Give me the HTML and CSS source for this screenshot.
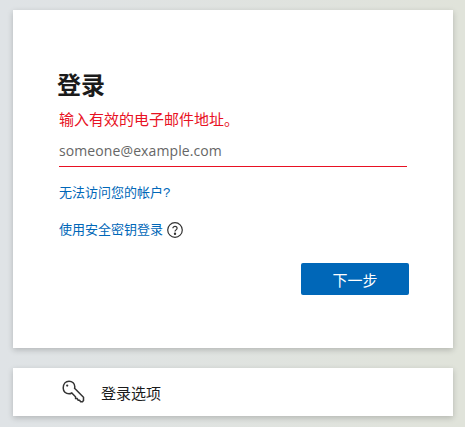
FILE: index.html
```html
<!DOCTYPE html>
<html lang="zh-CN">
<head>
  <meta charset="UTF-8">
  <meta name="viewport" content="width=device-width, initial-scale=1.0">
  <title>登录</title>
  <link rel="stylesheet" href="styles.css">
</head>
<body>
  <div class="card login-card">
    <h1>登录</h1>
    <div class="error">输入有效的电子邮件地址。</div>
    <input class="email" type="text" placeholder="someone@example.com">
    <div class="link-row"><a href="#">无法访问您的帐户?</a></div>
    <div class="link-row key-row">
      <a href="#">使用安全密钥登录</a>
      <svg class="help" width="16" height="16" viewBox="0 0 16 16" fill="none" stroke="#333" stroke-width="1.2">
        <circle cx="8" cy="8" r="7.3"/>
        <path d="M5.900 6.300c0-1.200 1-2 2.100-2s2.100.8 2.100 1.900c0 1.700-2.100 1.700-2.100 3.400"/>
        <circle cx="8" cy="11.800" r=".6" fill="#333"/>
      </svg>
    </div>
    <div class="actions">
      <button type="button">下一步</button>
    </div>
  </div>
  <div class="card options-card">
    <svg class="key" width="24" height="24" viewBox="0 0 24 24" fill="none" stroke="#333" stroke-width="1.5">
      <path d="M8 1.200c3.300 0 5.800 2.500 5.800 5.600 0 .6-.1 1.100-.2 1.500l8.900 8.900v3.300l-1 1.300h-1.800l-1.200-1.600h-1.300l-1.100-1.700h-1.500l-.1-1.700-3.700-3.800c-1 .6-1.800.8-2.800.8-3.200 0-5.800-2.400-5.800-5.700C2.200 3.700 4.800 1.200 8 1.200z"/>
      <circle cx="6.200" cy="5.600" r="1.100" fill="#333" stroke="none"/>
    </svg>
    <span>登录选项</span>
  </div>
</body>
</html>
```

FILE: styles.css
```css
body {
  margin: 0;
  height: 427px;
  overflow: hidden;
  font-family: "Liberation Sans", "Noto Sans CJK SC", sans-serif;
  background: linear-gradient(90deg, #dfe3e6, #e0e3da);
  color: #1b1b1b;
}

.card {
  width: 440px;
  margin-left: 13px;
  background: #fff;
  box-shadow: 0 2px 6px rgba(0, 0, 0, 0.2);
}

.login-card {
  box-sizing: border-box;
  height: 338px;
  margin-top: 10px;
  padding: 60px 46px 0;
}

h1 {
  margin: 0 0 0 -2px;
  font-size: 24px;
  line-height: 32px;
  font-weight: 600;
}

.error {
  margin-top: 8px;
  font-size: 15px;
  line-height: 20px;
  color: #e81123;
}

.email {
  display: block;
  box-sizing: border-box;
  width: 348px;
  height: 32px;
  margin-top: 5px;
  padding: 0;
  border: 0;
  border-bottom: 1px solid #e81123;
  outline: none;
  font-size: 14px;
  letter-spacing: 0.1px;
  font-family: "Open Sans", "Liberation Sans", sans-serif;
}

.email::placeholder {
  color: #666;
  opacity: 1;
}

.link-row {
  display: flex;
  align-items: center;
  gap: 4px;
  margin-top: 16px;
  font-size: 13px;
  line-height: 20px;
}

.key-row {
  margin-top: 17px;
}

.link-row a {
  color: #0067b8;
  text-decoration: none;
}

.actions {
  display: flex;
  justify-content: flex-end;
  width: 350px;
  margin-top: 23px;
}

button {
  width: 108px;
  height: 32px;
  padding: 0;
  border: 0;
  border-radius: 2px;
  background: #0067b8;
  color: #fff;
  font: 15px "Liberation Sans", "Noto Sans CJK SC", sans-serif;
}

.options-card {
  display: flex;
  align-items: center;
  height: 48px;
  margin-top: 20px;
  padding-left: 48px;
  width: 392px;
  gap: 16px;
  font-size: 15px;
}
```
